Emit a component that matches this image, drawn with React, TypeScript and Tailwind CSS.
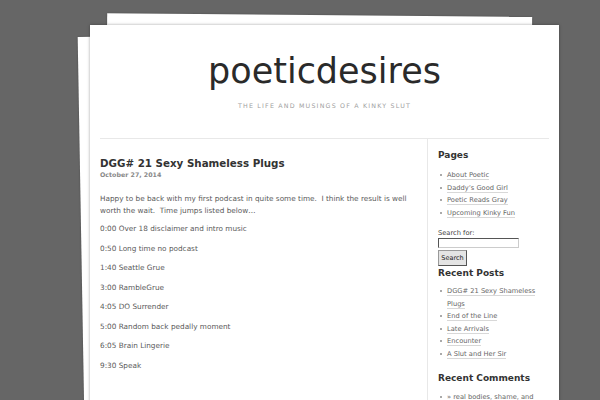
import React from "react";

const pages = ["About Poetic", "Daddy\u2019s Good Girl", "Poetic Reads Gray", "Upcoming Kinky Fun"];
const posts = ["DGG# 21 Sexy Shameless Plugs", "End of the Line", "Late Arrivals", "Encounter", "A Slut and Her Sir"];
const times = [
  "0:00 Over 18 disclaimer and intro music",
  "0:50 Long time no podcast",
  "1:40 Seattle Grue",
  "3:00 RambleGrue",
  "4:05 DO Surrender",
  "5:00 Random back pedally moment",
  "6:05 Brain Lingerie",
  "9:30 Speak",
];

function Item({ children }: { children: React.ReactNode }) {
  return (
    <li className="flex items-start">
      <span className="mt-[5px] mr-[5px] ml-[2px] h-[2px] w-[2px] shrink-0 bg-[#aaa]" />
      <span className="leading-[12.5px]">
        <span className="border-b border-[#d8d8d8] text-[#666]">{children}</span>
      </span>
    </li>
  );
}

export default function App() {
  return (
    <div className="relative h-[400px] overflow-hidden bg-[#666666] font-['DejaVu_Sans',sans-serif]">
      <div className="relative ml-[90px] mt-[25px] w-[469px]">
        <div className="absolute left-[15px] top-[-10px] h-[500px] w-[425px] rotate-[0.5deg] bg-white shadow-[0_0_2px_rgba(0,0,0,0.3)]" />
        <div className="absolute left-[-8px] top-[8px] h-[500px] w-[460px] rotate-[-1deg] bg-white shadow-[0_0_2px_rgba(0,0,0,0.3)]" />
        <div className="relative h-[420px] bg-white shadow-[0_0_3px_rgba(0,0,0,0.35)]">
          <div className="pt-[24px] text-center">
            <div className="text-[35px] font-normal leading-[44px] text-[#2a2a2a]">poeticdesires</div>
            <div className="mt-[8px] text-[6.3px] uppercase leading-[9px] tracking-[1.2px] text-[#a0a0a0]">
              The life and musings of a kinky slut
            </div>
          </div>
          <div className="mx-[10px] mt-[28px] flex border-t border-[#e8e8e8]">
            <div className="w-[327px] pt-[18px] pr-[10px]">
              <h2 className="text-[10.3px] font-bold leading-[13px] text-[#333]">DGG# 21 Sexy Shameless Plugs</h2>
              <div className="text-[6.3px] font-bold leading-[9px] text-[#888]">October 27, 2014</div>
              <div className="mt-[14px] text-[7.3px] leading-[12px] text-[#5a5a5a]">
                <p className="mb-[-1.5px]">
                  Happy to be back with my first podcast in quite some time.&nbsp; I think the result is well
                  <br />
                  worth the wait.&nbsp; Time jumps listed below…
                </p>
                {times.map((t) => (
                  <p key={t} className="mt-[7.5px]">{t}</p>
                ))}
              </div>
            </div>
            <div className="flex-1 border-l border-[#e8e8e8] pl-[10px] pt-[9px] text-[6.7px]">
              <h3 className="text-[9px] font-bold leading-[14px] text-[#333]">Pages</h3>
              <ul className="mt-[7px]">
                {pages.map((p) => (
                  <Item key={p}>{p}</Item>
                ))}
              </ul>
              <div className="mt-[10px] leading-[9px] text-[#444]">Search for:</div>
              <input className="block h-[10px] w-[81px] border border-t-[#555] border-l-[#555] border-r-[#ccc] border-b-[#ccc] bg-white" />
              <div className="mt-[2px] inline-block h-[16px] w-[29px] border border-[#999] border-r-[#555] border-b-[#555] bg-[#e4e4e4] text-center text-[6.5px] leading-[14px] text-[#222]">
                Search
              </div>
              <h3 className="text-[9px] font-bold leading-[14px] text-[#333]">Recent Posts</h3>
              <ul className="mt-[5px] w-[105px]">
                {posts.map((p) => (
                  <Item key={p}>{p}</Item>
                ))}
              </ul>
              <h3 className="mt-[11px] text-[9px] font-bold leading-[14px] text-[#333]">Recent Comments</h3>
              <ul className="mt-[6px]">
                <Item>» real bodies, shame, and</Item>
              </ul>
            </div>
          </div>
        </div>
      </div>
    </div>
  );
}
